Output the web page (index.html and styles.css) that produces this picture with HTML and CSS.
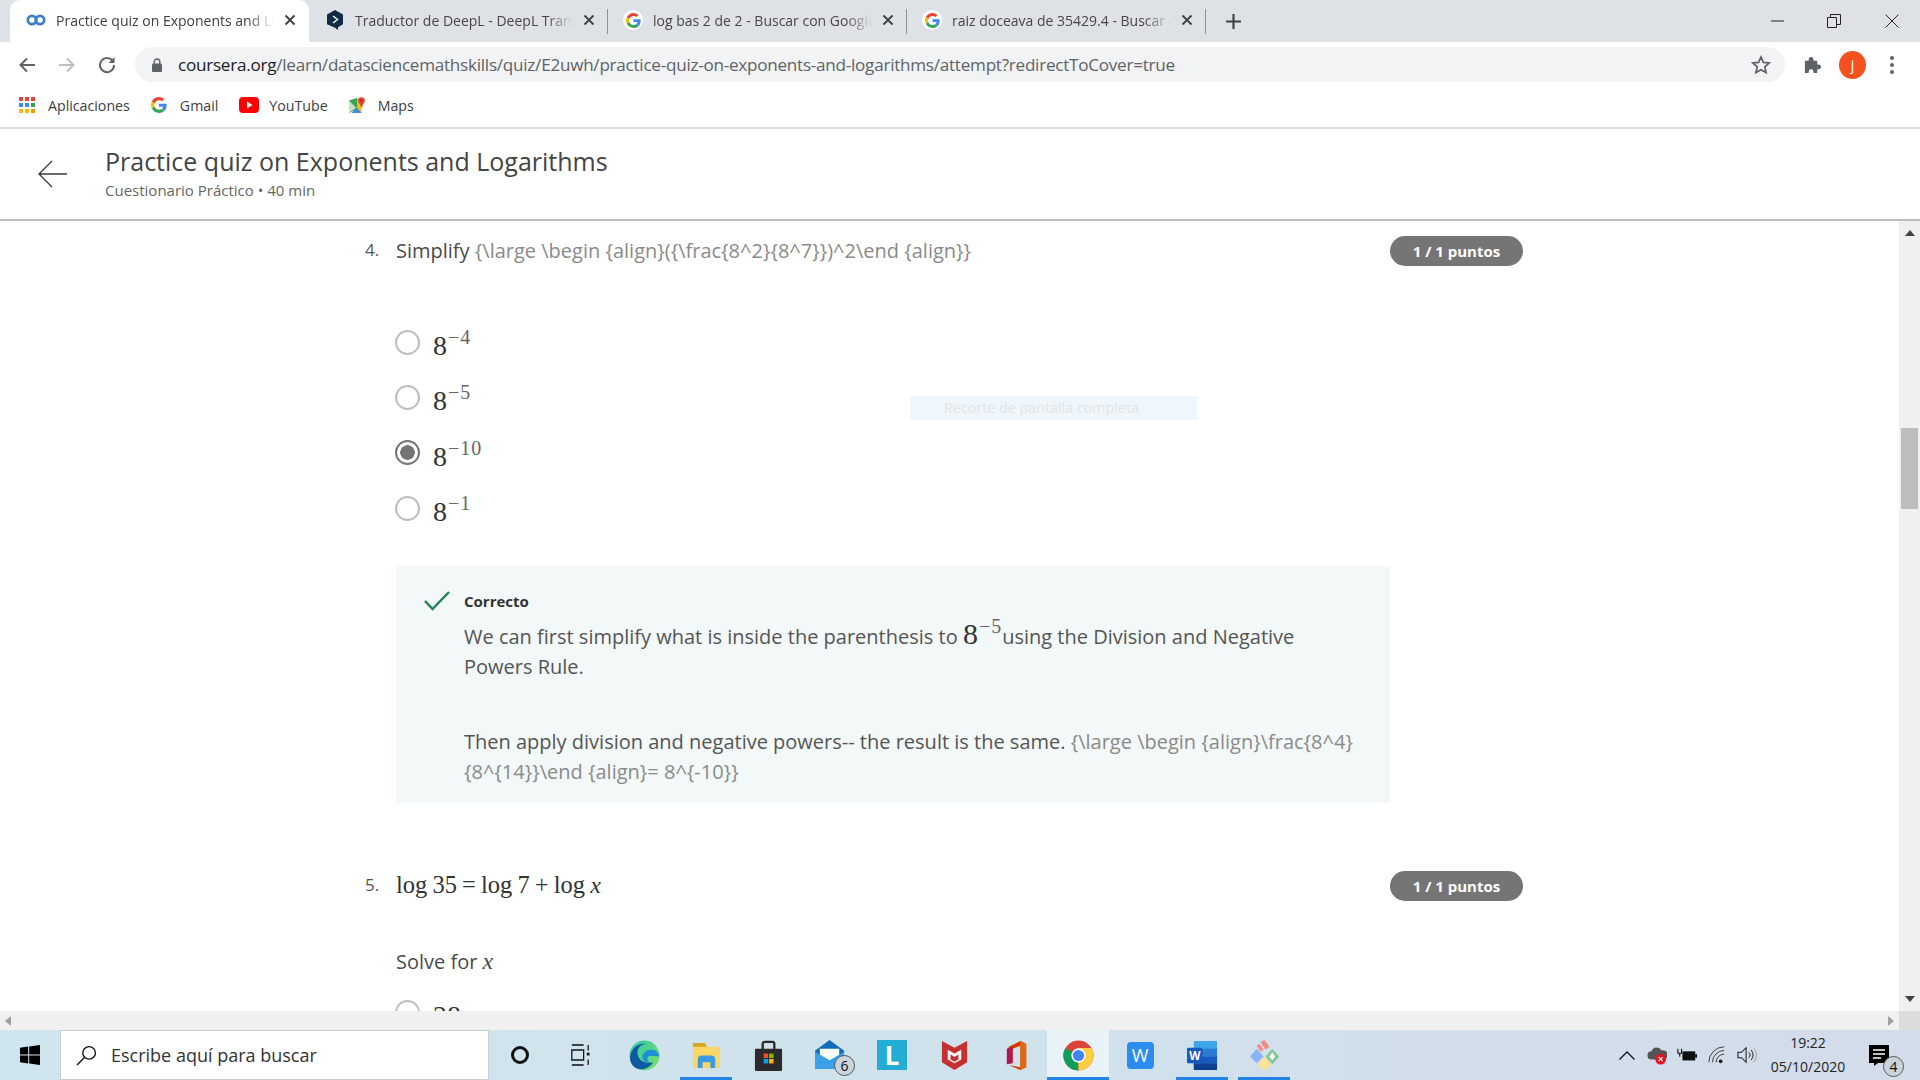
FILE: index.html
```html
<!DOCTYPE html>
<html lang="es">
<head>
    <meta charset="UTF-8">
    <title>Practice quiz on Exponents and Logarithms</title>
    <link rel="stylesheet" href="styles.css">
</head>
<body>
    <svg class="defs" width="0" height="0">
        <symbol id="g-logo" viewBox="0 0 48 48">
            <path fill="#EA4335" d="M24 9.5c3.54 0 6.71 1.22 9.21 3.6l6.85-6.85C35.9 2.38 30.47 0 24 0 14.62 0 6.51 5.38 2.56 13.22l7.98 6.19C12.43 13.72 17.74 9.5 24 9.5z"/>
            <path fill="#4285F4" d="M46.98 24.55c0-1.57-.15-3.09-.38-4.55H24v9.02h12.94c-.58 2.96-2.26 5.48-4.78 7.18l7.73 6c4.51-4.18 7.09-10.36 7.09-17.65z"/>
            <path fill="#FBBC05" d="M10.53 28.59c-.48-1.45-.76-2.99-.76-4.59s.27-3.14.76-4.59l-7.98-6.19C.92 16.46 0 20.12 0 24c0 3.88.92 7.54 2.56 10.78l7.97-6.19z"/>
            <path fill="#34A853" d="M24 48c6.48 0 11.93-2.13 15.89-5.81l-7.73-6c-2.15 1.45-4.92 2.3-8.16 2.3-6.26 0-11.57-4.22-13.47-9.91l-7.98 6.19C6.51 42.62 14.62 48 24 48z"/>
        </symbol>
        <symbol id="tab-x" viewBox="0 0 12 12">
            <path d="M1.5 1.5l9 9M10.5 1.5l-9 9" stroke="#3c4043" stroke-width="1.8" fill="none"/>
        </symbol>
    </svg>

    <div class="tabstrip">
        <div class="tab active">
            <svg class="favicon" viewBox="0 0 20 20"><circle cx="6" cy="10" r="4.200" fill="none" stroke="#3f7fc4" stroke-width="2.800"/><circle cx="14" cy="10" r="4.200" fill="none" stroke="#3f7fc4" stroke-width="2.800"/></svg>
            <span class="tab-title">Practice quiz on Exponents and Logarithms</span>
            <svg class="tab-close"><use href="#tab-x"/></svg>
        </div>
        <div class="tab sep">
            <svg class="favicon" viewBox="0 0 20 20"><path d="M10 0l8 4.6v9.6l-5 3V20l-3-2.3-8-3.5V4.6z" fill="#0f2b46"/><path d="M8 6l4.5 3.5L8 13" fill="none" stroke="#fff" stroke-width="1.5"/></svg>
            <span class="tab-title">Traductor de DeepL - DeepL Translate</span>
            <svg class="tab-close"><use href="#tab-x"/></svg>
        </div>
        <div class="tab sep">
            <span class="g-badge"><svg class="g-small"><use href="#g-logo"/></svg></span>
            <span class="tab-title">log bas 2 de 2 - Buscar con Google</span>
            <svg class="tab-close"><use href="#tab-x"/></svg>
        </div>
        <div class="tab sep">
            <span class="g-badge"><svg class="g-small"><use href="#g-logo"/></svg></span>
            <span class="tab-title">raiz doceava de 35429.4 - Buscar con Google</span>
            <svg class="tab-close"><use href="#tab-x"/></svg>
        </div>
        <svg class="new-tab" viewBox="0 0 16 16"><path d="M8 1v14M1 8h14" stroke="#3c4043" stroke-width="2"/></svg>
        <div class="window-btns">
            <svg viewBox="0 0 14 14"><path d="M0 7h13" stroke="#222" stroke-width="1"/></svg>
            <svg viewBox="0 0 14 14"><path d="M.5 3.5h9v10h-9zM3.5 3.5v-3h10v10h-4" fill="none" stroke="#222" stroke-width="1"/></svg>
            <svg viewBox="0 0 14 14"><path d="M.5.5l13 13M13.5.5l-13 13" stroke="#222" stroke-width="1"/></svg>
        </div>
    </div>

    <div class="toolbar">
        <svg class="nav-icon" viewBox="0 0 18 18"><path d="M17 9H3M9 2.500L2.500 9 9 15.500" fill="none" stroke="#5f6368" stroke-width="2"/></svg>
        <svg class="nav-icon" viewBox="0 0 18 18"><path d="M1 9h14M9 2.500L15.500 9 9 15.500" fill="none" stroke="#bdc1c6" stroke-width="2"/></svg>
        <svg class="nav-icon" viewBox="0 0 18 18"><path d="M15 5.500A7 7 0 1 0 16 9" fill="none" stroke="#5f6368" stroke-width="2"/><path d="M16.500 1v6h-6z" fill="#5f6368"/></svg>
        <div class="omnibox">
            <svg class="lock" viewBox="0 0 12 14"><rect x="1" y="5.500" width="10" height="8.500" rx="1.200" fill="#5f6368"/><path d="M3.200 6V3.800a2.800 2.800 0 0 1 5.600 0V6" fill="none" stroke="#5f6368" stroke-width="1.400"/></svg>
            <span class="url"><b>coursera.org</b>/learn/datasciencemathskills/quiz/E2uwh/practice-quiz-on-exponents-and-logarithms/attempt?redirectToCover=true</span>
            <svg class="star" viewBox="0 0 20 20"><path d="M10 2l2.400 5.400 5.800.6-4.400 3.900 1.300 5.700L10 14.700l-5.100 2.900 1.300-5.700L1.800 8l5.800-.6z" fill="none" stroke="#5f6368" stroke-width="1.700"/></svg>
        </div>
        <svg class="puzzle" viewBox="0 0 20 20"><path d="M2 6h4V4.500a2.500 2.500 0 0 1 5 0V6h4v4h1.500a2.500 2.500 0 0 1 0 5H15v4h-4v-1.500a2.500 2.500 0 0 0-5 0V19H2z" fill="#5f6368"/></svg>
        <div class="avatar">j</div>
        <div class="menu-dots"><i></i><i></i><i></i></div>
    </div>

    <div class="bookmarks">
        <div class="bookmark">
            <svg class="bm-icon" viewBox="0 0 16 16">
                <g fill="#ea4335"><rect width="4" height="4"/><rect x="6" width="4" height="4"/><rect x="12" width="4" height="4"/></g>
                <g fill="#4285f4"><rect y="6" width="4" height="4"/><rect x="6" y="6" width="4" height="4"/></g>
                <rect x="12" y="6" width="4" height="4" fill="#34a853"/>
                <g fill="#fbbc05"><rect y="12" width="4" height="4"/><rect x="6" y="12" width="4" height="4"/></g>
                <rect x="12" y="12" width="4" height="4" fill="#f29900"/>
            </svg>
            <span>Aplicaciones</span>
        </div>
        <div class="bookmark">
            <svg class="bm-icon"><use href="#g-logo"/></svg>
            <span>Gmail</span>
        </div>
        <div class="bookmark">
            <svg class="bm-icon yt" viewBox="0 0 20 16"><rect width="20" height="16" rx="4" fill="#f00"/><path d="M8 4.500l5.500 3.500L8 11.500z" fill="#fff"/></svg>
            <span>YouTube</span>
        </div>
        <div class="bookmark">
            <svg class="bm-icon" viewBox="0 0 18 18"><path d="M0 4l9-3v13l-9 4z" fill="#34a853"/><path d="M9 1l5 3v14l-5-4z" fill="#fbbc05"/><path d="M3 18l6-6 5 6z" fill="#4285f4"/><path d="M0 4l8 8-8 6z" fill="#c5e1c5"/><circle cx="14" cy="4" r="3.800" fill="#ea4335"/><path d="M11 6l3 6 3-6z" fill="#ea4335"/><circle cx="14" cy="4" r="1.300" fill="#a51c14"/></svg>
            <span>Maps</span>
        </div>
    </div>

    <header class="quiz-header">
        <svg class="back-arrow" viewBox="0 0 30 28"><path d="M29 14H1M14 1L1 14l13 13" fill="none" stroke="#373a3c" stroke-width="1.300"/></svg>
        <div>
            <h1 class="quiz-title">Practice quiz on Exponents and Logarithms</h1>
            <div class="quiz-sub">Cuestionario Práctico • 40 min</div>
        </div>
    </header>

    <div class="viewport">
        <main class="page">
            <div class="watermark">Recorte de pantalla completa</div>
            <div class="quiz-col">
                <section class="question">
                    <div class="q-head">
                        <span class="q-num">4.</span>
                        <div class="q-text">Simplify <span class="latex">{\large \begin {align}({\frac{8^2}{8^7}})^2\end {align}}</span></div>
                        <span class="points">1 / 1 puntos</span>
                    </div>
                    <div class="options">
                        <div class="option"><span class="radio"></span><span class="math">8<sup>−4</sup></span></div>
                        <div class="option"><span class="radio"></span><span class="math">8<sup>−5</sup></span></div>
                        <div class="option"><span class="radio checked"></span><span class="math">8<sup>−10</sup></span></div>
                        <div class="option"><span class="radio"></span><span class="math">8<sup>−1</sup></span></div>
                    </div>
                    <div class="feedback">
                        <svg class="check" viewBox="0 0 26 20"><path d="M1 10l7.500 8L25 1" fill="none" stroke="#1f8354" stroke-width="2.400"/></svg>
                        <div class="feedback-body">
                            <div class="feedback-label">Correcto</div>
                            <p class="feedback-text">We can first simplify what is inside the parenthesis to <span class="math inline">8<sup>−5</sup></span>using the Division and Negative Powers Rule.</p>
                            <p class="feedback-text second">Then apply division and negative powers-- the result is the same. <span class="latex">{\large \begin {align}\frac{8^4}{8^{14}}\end {align}= 8^{-10}}</span></p>
                        </div>
                    </div>
                </section>

                <section class="question next">
                    <div class="q-head">
                        <span class="q-num">5.</span>
                        <div class="q-text formula">log 35 = log 7 + log <i>x</i></div>
                        <span class="points">1 / 1 puntos</span>
                    </div>
                    <p class="solve">Solve for <i class="var">x</i></p>
                    <div class="option clipped"><span class="radio"></span><span class="math">28</span></div>
                </section>
            </div>
        </main>
        <div class="vscroll">
            <span class="arrow up"></span>
            <span class="thumb"></span>
            <span class="arrow down"></span>
        </div>
    </div>

    <div class="hscroll">
        <div class="hscroll-track">
            <span class="arrow left"></span>
            <span class="arrow right"></span>
        </div>
        <span class="corner"></span>
    </div>

    <footer class="taskbar">
        <div class="start">
            <svg viewBox="0 0 20 20"><path d="M0 2.800L8.200 1.600V9.500H0zM9.200 1.400L20 0v9.500H9.200zM0 10.500h8.200v7.900L0 17.200zM9.200 10.500H20V20L9.200 18.600z" fill="#000"/></svg>
        </div>
        <div class="search">
            <svg class="search-icon" viewBox="0 0 20 20"><circle cx="12.500" cy="7.500" r="6" fill="none" stroke="#111" stroke-width="1.300"/><path d="M8 12L1 19" stroke="#111" stroke-width="1.300"/></svg>
            <span>Escribe aquí para buscar</span>
        </div>
        <div class="task"><span class="cortana"></span></div>
        <div class="task view">
            <svg class="ico-small" viewBox="0 0 22 24"><path d="M2 1h13M2 23h13M2 6.500h13v11H2z" fill="none" stroke="#111" stroke-width="1.400"/><path d="M20 1v6M20 17v6" stroke="#111" stroke-width="1.400"/><rect x="18.500" y="9.500" width="3" height="3" fill="#111"/></svg>
        </div>
        <div class="task">
            <svg class="ico" viewBox="0 0 32 32">
                <defs><linearGradient id="edge1" x1="0" y1="0" x2="1" y2="1"><stop offset="0" stop-color="#2fc7a8"/><stop offset="1" stop-color="#7fe06a"/></linearGradient></defs>
                <circle cx="16" cy="16" r="15.500" fill="url(#edge1)"/>
                <path d="M1 18C2 8 10 3 17 4c-7 1-9 6-8 11 1 7 9 10 16 8-4 6-10 8-15 7C5 29 1 24 1 18z" fill="#0c59a4"/>
                <path d="M31 17c0-5-5-8-10-7-5 1-8 5-7 9 1 3 4 5 8 4-3-1-4-4-2-6 2-1 5 0 11 0z" fill="#1e90d8"/>
            </svg>
        </div>
        <div class="task open">
            <svg class="ico" viewBox="0 0 32 32"><path d="M2 3h12l2 3v5H2z" fill="#d9a520"/><path d="M2 7h28v22H2z" fill="#fcd667"/><path d="M7 29v-9a4 4 0 0 1 4-4h10a4 4 0 0 1 4 4v9h-5v-6h-8v6z" fill="#3c9be0"/></svg>
        </div>
        <div class="task">
            <svg class="ico" viewBox="0 0 32 32"><rect x="2" y="9" width="28" height="23" rx="1" fill="#2b2b2b"/><path d="M10 12V4a2 2 0 0 1 2-2h8a2 2 0 0 1 2 2v8" fill="none" stroke="#2b2b2b" stroke-width="2.400"/><rect x="11" y="14" width="4.600" height="4.600" fill="#f25022"/><rect x="16.600" y="14" width="4.600" height="4.600" fill="#7fba00"/><rect x="11" y="19.600" width="4.600" height="4.600" fill="#00a4ef"/><rect x="16.600" y="19.600" width="4.600" height="4.600" fill="#ffb900"/></svg>
        </div>
        <div class="task">
            <svg class="ico" viewBox="0 0 32 32"><path d="M0 11L15 0l15 11v19H0z" fill="#0f6cbd"/><path d="M5 9h20v8l-10 6-10-6z" fill="#fff"/><path d="M0 12l15 9 15-9v18H0z" fill="#3aa0ea"/></svg>
            <span class="count">6</span>
        </div>
        <div class="task"><span class="l-logo">L</span></div>
        <div class="task">
            <svg class="ico" viewBox="0 0 32 32"><path d="M3 1l13 7 13-7v22L16 31 3 23z" fill="#c62f2f"/><path d="M9 10l7 4 7-4v10l-7 4-7-4z" fill="#fff" opacity=".95"/><path d="M12 15l4 2.500 4-2.500v5l-4 2.500-4-2.500z" fill="#c62f2f"/></svg>
        </div>
        <div class="task">
            <svg class="ico" viewBox="0 0 32 32"><path d="M8 7l12-6 6 3v24l-6 3-12-5 12 2V6l-8 3v14l-6 2z" fill="#d83b01"/><path d="M6 9l6-2v17l-6 1z" fill="#b3164f"/><path d="M20 1l6 3v24l-6 3z" fill="#e06a10"/></svg>
        </div>
        <div class="task open active">
            <svg class="ico" viewBox="0 0 32 32">
                <circle cx="16" cy="16" r="15.500" fill="#db4437"/>
                <path d="M16 16L2.500 8.200A15.500 15.500 0 0 0 16 31.500z" fill="#0f9d58"/>
                <path d="M16 16v15.500A15.500 15.500 0 0 0 31.500 16 15.500 15.500 0 0 0 29.400 8.200H16z" fill="#ffcd40"/>
                <circle cx="16" cy="16" r="7.400" fill="#fff"/>
                <circle cx="16" cy="16" r="5.800" fill="#4285f4"/>
            </svg>
        </div>
        <div class="task">
            <div class="wps">W</div>
        </div>
        <div class="task open">
            <svg class="ico" viewBox="0 0 32 32"><rect x="7" y="1" width="24" height="30" rx="1" fill="#41a5ee"/><rect x="7" y="9" width="24" height="8" fill="#2b7cd3"/><rect x="7" y="17" width="24" height="7" fill="#185abd"/><rect x="7" y="24" width="24" height="7" fill="#103f91"/><rect x="0" y="8" width="16" height="16" rx="1" fill="#185abd"/><text x="8" y="21" class="word-w">W</text></svg>
        </div>
        <div class="task open">
            <svg class="ico" viewBox="0 0 32 32"><path d="M8 9l7 8-7 7-7-7z" fill="#8ab4f8"/><path d="M16 17l7 8-7 7-7-7z" fill="#fde293"/><path d="M24 9l7 8-7 8-7-8z" fill="#81c995"/><path d="M24 13l3 4-3 4-3-4z" fill="#fff"/><path d="M12 2l4-2 5 7-4 3z" fill="#f28b82"/><path d="M8 6l3-2 4 6-3 2z" fill="#f28b82"/></svg>
        </div>

        <div class="tray">
            <svg class="tray-chevron" viewBox="0 0 16 9"><path d="M.5 8.500L8 1l7.500 7.500" fill="none" stroke="#111" stroke-width="1.300"/></svg>
            <svg class="tray-ico" viewBox="0 0 22 22"><path d="M5 16a4.500 4.500 0 0 1 0-9 6 6 0 0 1 11-1 5 5 0 0 1 3 10z" fill="#555"/><circle cx="15" cy="15.500" r="6" fill="#e81123"/><path d="M12.800 13.300l4.400 4.400M17.200 13.300l-4.400 4.400" stroke="#fff" stroke-width="1.300"/></svg>
            <svg class="tray-ico" viewBox="0 0 22 20"><path d="M1 3v5h4V3M3 8v4" fill="none" stroke="#111" stroke-width="1.200"/><rect x="6" y="6" width="14" height="10" fill="#111"/><rect x="20" y="9" width="2" height="4" fill="#111"/></svg>
            <svg class="tray-ico" viewBox="0 0 22 22"><path d="M2 19A17 17 0 0 1 19 2M6 19A13 13 0 0 1 19 6M10 19a9 9 0 0 1 9-9" fill="none" stroke="#333" stroke-width="1"/><circle cx="15" cy="18" r="2" fill="#111"/></svg>
            <svg class="tray-ico" viewBox="0 0 22 22"><path d="M1 8h4l5-5v16l-5-5H1z" fill="none" stroke="#222" stroke-width="1.200"/><path d="M13 8a4 4 0 0 1 0 6M15.500 5.500a8 8 0 0 1 0 11" fill="none" stroke="#222" stroke-width="1.100"/><path d="M18 3a11 11 0 0 1 0 16" fill="none" stroke="#999" stroke-width="1"/></svg>
            <div class="clock"><span>19:22</span><span>05/10/2020</span></div>
            <div class="notify">
                <svg viewBox="0 0 20 21"><path d="M0 0h20v18H9l-4 3v-3H0z" fill="#000"/><path d="M4 5h12M4 9h12M4 13h8" stroke="#fff" stroke-width="1.300"/></svg>
                <span class="count">4</span>
            </div>
        </div>
    </footer>
</body>
</html>
```

FILE: styles.css
```css
* {
    box-sizing: border-box;
}

body {
    margin: 0;
    width: 1920px;
    height: 1080px;
    overflow: hidden;
    background-color: #fff;
    font-family: 'Open Sans', sans-serif;
    color: #373a3c;
}

.defs {
    display: block;
    height: 0;
}

h1, p {
    margin: 0;
}

/* browser tabs */
.tabstrip {
    display: flex;
    align-items: center;
    height: 42px;
    padding-left: 10px;
    background-color: #dee1e6;
}

.tab {
    display: flex;
    align-items: center;
    flex: none;
    position: relative;
    width: 299px;
    height: 42px;
    padding: 0 13px 2px 16px;
    font-size: 14px;
    color: #45474a;
}

.tab.active {
    background-color: #fff;
    border-radius: 10px 10px 0 0;
    color: #3c4043;
}

.tab.sep::after {
    content: "";
    position: absolute;
    right: 0;
    top: 9px;
    width: 1px;
    height: 25px;
    background-color: #8e9297;
}

.favicon {
    flex: none;
    width: 20px;
    height: 20px;
    margin-right: 10px;
}

.g-badge {
    display: flex;
    align-items: center;
    justify-content: center;
    flex: none;
    width: 20px;
    height: 20px;
    margin: 0 10px 0 -1px;
    border-radius: 50%;
    background-color: #fff;
}

.g-small {
    width: 15px;
    height: 15px;
}

.tab-title {
    flex: 1;
    overflow: hidden;
    white-space: nowrap;
    -webkit-mask-image: linear-gradient(90deg, #000 88%, transparent 100%);
    mask-image: linear-gradient(90deg, #000 88%, transparent 100%);
}

.tab-close {
    flex: none;
    width: 12px;
    height: 12px;
    margin-left: 10px;
}

.new-tab {
    width: 17px;
    height: 17px;
    margin-left: 19px;
}

.window-btns {
    display: flex;
    margin-left: auto;
    padding-right: 21px;
    gap: 44px;
}

.window-btns svg {
    width: 14px;
    height: 14px;
}

.window-btns svg:first-child {
    margin-right: -2px;
}

/* address bar */
.toolbar {
    display: flex;
    align-items: center;
    height: 45px;
    padding: 0 18px;
    background-color: #fff;
}

.nav-icon {
    flex: none;
    width: 18px;
    height: 18px;
    margin-right: 22px;
}

.omnibox {
    display: flex;
    align-items: center;
    width: 1650px;
    height: 35px;
    margin-left: -3px;
    padding: 0 14px 0 16px;
    border-radius: 18px;
    background-color: #f1f3f4;
}

.lock {
    width: 12px;
    height: 14px;
}

.url {
    margin-left: 15px;
    font-size: 17.100px;
    letter-spacing: -0.250px;
    color: #5f6368;
    white-space: nowrap;
}

.url b {
    font-weight: 400;
    color: #202124;
}

.star {
    width: 20px;
    height: 20px;
    margin-left: auto;
}

.puzzle {
    flex: none;
    width: 19px;
    height: 19px;
    margin-left: 18px;
}

.avatar {
    flex: none;
    width: 27px;
    height: 28px;
    margin-left: 17px;
    border-radius: 50%;
    background-color: #f4511e;
    color: #fff;
    font-size: 14px;
    line-height: 27px;
    text-align: center;
}

.menu-dots {
    display: flex;
    flex-direction: column;
    gap: 3px;
    margin-left: 24px;
}

.menu-dots i {
    width: 4px;
    height: 4px;
    border-radius: 50%;
    background-color: #5f6368;
}

/* bookmarks */
.bookmarks {
    display: flex;
    align-items: center;
    height: 42px;
    padding: 0 0 4px 19px;
    border-bottom: 2px solid #dadce0;
    font-size: 14.200px;
    color: #3c4043;
}

.bookmark {
    display: flex;
    align-items: center;
    margin-right: 21px;
}

.bm-icon {
    width: 16px;
    height: 16px;
    margin-right: 13px;
}

.bm-icon.yt {
    width: 20px;
    margin-right: 10px;
}

/* course header */
.quiz-header {
    display: flex;
    align-items: center;
    height: 92px;
    padding: 0 0 4px 38px;
    border-bottom: 2px solid #bdbdbd;
}

.back-arrow {
    flex: none;
    width: 30px;
    height: 28px;
    margin: 4px 37px 0 0;
}

.quiz-title {
    font-size: 25px;
    font-weight: 400;
    line-height: 34px;
    color: #444;
}

.quiz-sub {
    margin-top: 2px;
    font-size: 15px;
    line-height: 20px;
    color: #666;
}

/* page with scrollbar */
.viewport {
    display: flex;
    height: 790px;
}

.page {
    flex: 1;
    position: relative;
    overflow: hidden;
}

.watermark {
    position: absolute;
    left: 910px;
    top: 175px;
    width: 287px;
    height: 24px;
    padding-left: 34px;
    background-color: #eff7fd;
    color: #e4e4e4;
    font-size: 14.300px;
    line-height: 24px;
}

.quiz-col {
    width: 1158px;
    margin-left: 365px;
    padding-top: 15px;
}

.q-head {
    display: flex;
    align-items: center;
    height: 30px;
}

.q-num {
    flex: none;
    width: 31px;
    font-size: 17px;
    color: #555;
    margin-top: -3px;
}

.q-text {
    flex: 1;
    padding-bottom: 2px;
    font-size: 20px;
    color: #4a4a4a;
}

.latex {
    color: #8a8a8a;
}

.formula {
    font-family: 'Liberation Serif', serif;
    font-size: 24.500px;
    word-spacing: -1px;
    color: #333;
}

.points {
    flex: none;
    width: 133px;
    height: 30px;
    border-radius: 15px;
    background-color: #757575;
    color: #fff;
    font-size: 15px;
    font-weight: 700;
    line-height: 30px;
    text-align: center;
}

.options {
    margin: 48.500px 0 0 31px;
}

.option {
    display: flex;
    align-items: center;
    height: 55.300px;
}

.radio {
    flex: none;
    width: 25px;
    height: 25px;
    margin-left: -1px;
    border: 2.500px solid #bdbdbd;
    border-radius: 50%;
    background-color: #fff;
}

.radio.checked {
    border-color: #757575;
    background-image: radial-gradient(circle, #757575 0, #757575 7px, #fff 7.500px);
}

.math {
    margin-left: 13px;
    font-family: 'Liberation Serif', serif;
    font-size: 28px;
    line-height: 1;
    color: #333;
    padding-top: 8px;
}

.math sup {
    margin-left: 1px;
    font-size: 20px;
    letter-spacing: 1px;
    line-height: 0;
    vertical-align: 11px;
    color: #666;
}

.math.inline {
    margin-left: 0;
    padding-top: 0;
    font-size: 30px;
    line-height: 0;
}

.feedback {
    display: flex;
    width: 994px;
    height: 237px;
    margin: 30.500px 0 0 31px;
    padding: 25px 28px 0 28px;
    background-color: #f3f8f8;
}

.check {
    flex: none;
    width: 26px;
    height: 20px;
    margin-right: 14px;
}

.feedback-body {
    flex: 1;
}

.feedback-label {
    font-size: 15px;
    font-weight: 700;
    line-height: 20px;
    color: #333;
}

.feedback-text {
    margin-top: 11px;
    font-size: 20px;
    line-height: 30px;
    color: #555;
}

.feedback-text.second {
    margin-top: 45px;
}

.question.next {
    margin-top: 68px;
}

.solve {
    margin: 45px 0 0 31px;
    font-size: 20px;
    line-height: 30px;
    color: #4a4a4a;
}

.var,
.q-text i {
    font-family: 'Liberation Serif', serif;
    font-size: 24px;
}

.option.clipped {
    margin: 7.500px 0 0 31px;
}

/* scrollbars */
.vscroll {
    display: flex;
    flex-direction: column;
    align-items: center;
    flex: none;
    position: relative;
    width: 21px;
    background-color: #f0f0f0;
}

.thumb {
    position: absolute;
    top: 207px;
    left: 2px;
    width: 17px;
    height: 81px;
    background-color: #bdbdbd;
}

.arrow {
    display: block;
    width: 0;
    height: 0;
    border: 5px solid transparent;
}

.arrow.up {
    margin-top: 4px;
    border-bottom: 6px solid #444;
}

.arrow.down {
    margin-top: auto;
    margin-bottom: 4px;
    border-top: 6px solid #444;
}

.hscroll {
    display: flex;
    height: 19px;
    background-color: #f0f0f0;
}

.hscroll-track {
    display: flex;
    align-items: center;
    justify-content: space-between;
    flex: 1;
    padding: 0 5px;
}

.arrow.left {
    border-width: 5px 6px 5px 0;
    border-right-color: #a0a0a0;
}

.arrow.right {
    border-width: 5px 0 5px 6px;
    border-left-color: #a0a0a0;
}

.corner {
    width: 21px;
    background-color: #dcdcdc;
}

/* windows taskbar */
.taskbar {
    display: flex;
    align-items: stretch;
    height: 50px;
    background-image: linear-gradient(90deg, #cfe5ee 0, #d0e2ec 50%, #d3dcea 100%);
}

.start {
    display: flex;
    align-items: center;
    justify-content: center;
    flex: none;
    width: 60px;
}

.start svg {
    width: 20px;
    height: 20px;
}

.search {
    display: flex;
    align-items: center;
    flex: none;
    width: 429px;
    padding-left: 15px;
    border: 1px solid #c9cdd0;
    background-color: #fff;
    font-size: 18px;
    color: #333;
}

.search-icon {
    width: 21px;
    height: 21px;
    margin-right: 14px;
}

.task {
    display: flex;
    align-items: center;
    justify-content: center;
    flex: none;
    position: relative;
    width: 62px;
}

.task.view {
    padding-right: 5px;
}

.task.open::after {
    content: "";
    position: absolute;
    left: 5px;
    right: 5px;
    bottom: 0;
    height: 3px;
    background-color: #2384e8;
}

.task.active {
    background-color: #e8f2f7;
}

.task.active::after {
    left: 0;
    right: 0;
}

.ico {
    width: 31px;
    height: 31px;
}

.ico-small {
    width: 20px;
    height: 22px;
}

.cortana {
    width: 18px;
    height: 18px;
    border: 3px solid #111;
    border-radius: 50%;
}

.count {
    position: absolute;
    right: 6px;
    bottom: 4px;
    width: 21px;
    height: 21px;
    border: 1px solid #555;
    border-radius: 50%;
    background-color: #c9d4dc;
    color: #111;
    font-size: 14px;
    line-height: 19px;
    text-align: center;
}

.l-logo {
    width: 30px;
    height: 30px;
    background-color: #23add6;
    color: #fff;
    font-size: 26px;
    font-weight: 700;
    line-height: 30px;
    text-align: center;
}

.wps {
    width: 27px;
    height: 27px;
    border-radius: 4px;
    background-color: #2d8cf0;
    color: #fff;
    font-size: 18px;
    font-weight: 400;
    line-height: 27px;
    text-align: center;
}

.word-w {
    fill: #fff;
    font-family: 'Open Sans', sans-serif;
    font-size: 12px;
    font-weight: 700;
    text-anchor: middle;
}

.tray {
    display: flex;
    align-items: center;
    margin-left: auto;
    padding-right: 12px;
}

.tray-chevron {
    width: 16px;
    height: 9px;
    margin-right: 12px;
}

.tray-ico {
    width: 20px;
    height: 20px;
    margin-right: 10px;
}

.clock {
    display: flex;
    flex-direction: column;
    align-items: center;
    width: 88px;
    margin-left: -3px;
    font-size: 14px;
    line-height: 24px;
    color: #222;
}

.notify {
    position: relative;
    width: 41px;
    height: 100%;
    margin-left: 15px;
}

.notify svg {
    position: absolute;
    left: 2px;
    top: 15px;
    width: 20px;
    height: 21px;
}

.notify .count {
    right: 4px;
    bottom: 3px;
}
```
